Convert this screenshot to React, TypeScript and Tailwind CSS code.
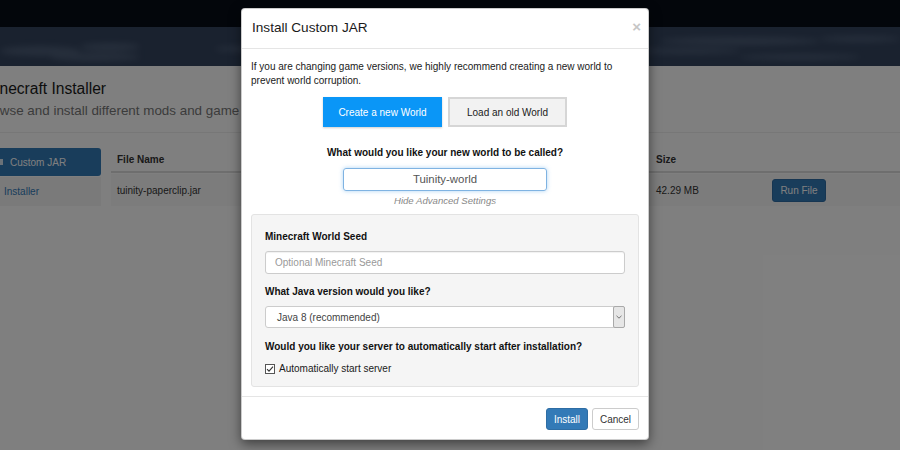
import React from "react";

function Banner() {
  return (
    <div className="relative h-[39px] bg-[#34445e] overflow-hidden">
      <svg width="900" height="39" className="absolute left-0 top-0">
        <defs>
          <filter id="b" x="-20%" y="-50%" width="140%" height="200%">
            <feGaussianBlur stdDeviation="3" />
          </filter>
        </defs>
        <g filter="url(#b)" fill="#6b7c95" opacity="0.45">
          <ellipse cx="40" cy="24" rx="40" ry="5" />
          <ellipse cx="110" cy="20" rx="30" ry="4" />
          <ellipse cx="95" cy="30" rx="45" ry="4" />
          <ellipse cx="250" cy="22" rx="35" ry="3" />
          <ellipse cx="740" cy="14" rx="80" ry="4" />
          <ellipse cx="690" cy="24" rx="50" ry="3" />
          <ellipse cx="800" cy="30" rx="60" ry="3" />
          <ellipse cx="860" cy="12" rx="40" ry="3" />
        </g>
      </svg>
    </div>
  );
}

function Background() {
  return (
    <div className="w-[900px] h-[450px] bg-white overflow-hidden">
      <div className="h-[27px] bg-[#060c16]" />
      <Banner />
      <div className="pt-[13px]">
        <div className="ml-[-17px] text-[15.6px] leading-[20px] text-[#1a1a1a] whitespace-nowrap">
          Minecraft Installer
        </div>
        <div className="ml-[-21px] mt-[3px] text-[13.4px] leading-[18px] text-[#777] whitespace-nowrap">
          Browse and install different mods and game versions
        </div>
        <div className="mt-[12px] h-px bg-[#eee]" />
        <div className="mt-[15px] flex">
          <div className="w-[101px] shrink-0 flex flex-col gap-[1px]">
            <div className="h-[28px] bg-[#337ab7] rounded-r-[3px] flex items-center text-white text-[10px] pl-[10px] relative">
              <span className="absolute left-[-3px] top-[11px] w-[6px] h-[6px] bg-white/80" />
              Custom JAR
            </div>
            <div className="h-[29px] bg-[#f5f5f5] flex items-center text-[#337ab7] text-[10px] pl-[4px]">
              Installer
            </div>
          </div>
          <div className="ml-[10px] flex-1">
            <div className="h-[25px] flex items-center border-b-2 border-[#ddd] text-[10px] font-bold text-[#333]">
              <div className="w-[539px] pl-[6px]">File Name</div>
              <div className="w-[122px] pl-[6px]">Size</div>
            </div>
            <div className="mt-[1px] h-[32px] flex items-center bg-[#f9f9f9] text-[10px] text-[#333]">
              <div className="w-[539px] pl-[6px]">tuinity-paperclip.jar</div>
              <div className="w-[122px] pl-[6px]">42.29 MB</div>
              <div className="h-[23px] w-[54px] bg-[#337ab7] border border-[#2e6da4] rounded-[3px] text-white flex items-center justify-center">
                Run File
              </div>
            </div>
          </div>
        </div>
      </div>
    </div>
  );
}

function Modal() {
  return (
    <div className="absolute left-[241px] top-[8px] w-[408px] bg-white rounded-[4px] border border-black/20 shadow-[0_4px_12px_rgba(0,0,0,0.5)] text-[#333]">
      <div className="h-[40px] border-b border-[#e5e5e5] px-[10px] pt-[10px] flex justify-between">
        <div className="text-[13.6px] leading-[18px] text-[#1a1a1a]">Install Custom JAR</div>
        <div className="text-[15px] leading-[14px] font-bold text-[#c6c6c6] mr-[-3px] mt-[1px]">×</div>
      </div>
      <div className="px-[9px] pt-[11px] pb-[9px]">
        <p className="text-[10px] leading-[14px] text-[#1a1a1a]">
          If you are changing game versions, we highly recommend creating a new world to prevent world corruption.
        </p>
        <div className="mt-[9px] flex justify-center gap-[6px]">
          <div className="w-[119px] h-[30px] bg-[#0a96f7] shadow-[0_1px_2px_rgba(0,0,0,0.2)] flex items-center justify-center text-white text-[10px]">
            Create a new World
          </div>
          <div className="w-[119px] h-[30px] bg-[#f2f2f2] border-2 border-[#d6d6d6] flex items-center justify-center text-[#1a1a1a] text-[10px]">
            Load an old World
          </div>
        </div>
        <div className="mt-[19px] text-center text-[10px] leading-[14px] font-bold text-[#111]">
          What would you like your new world to be called?
        </div>
        <div className="mt-[8px] flex justify-center">
          <div className="w-[204px] h-[23px] border border-[#7fb3e2] rounded-[3px] shadow-[0_0_4px_rgba(102,175,233,0.55)] flex items-center justify-center text-[11.4px] text-[#555]">
            Tuinity-world
          </div>
        </div>
        <div className="mt-[3px] text-center text-[9.6px] leading-[14px] italic text-[#888]">
          Hide Advanced Settings
        </div>
        <div className="mt-[6px] bg-[#f5f5f5] border border-[#e3e3e3] rounded-[3px] px-[13px] pt-[15px] pb-[10px]">
          <div className="text-[10px] leading-[14px] font-bold text-[#111]">Minecraft World Seed</div>
          <div className="mt-[7px] h-[23px] bg-white border border-[#ccc] rounded-[3px] shadow-[inset_0_1px_1px_rgba(0,0,0,0.06)] flex items-center pl-[9px] text-[10px] text-[#999]">
            Optional Minecraft Seed
          </div>
          <div className="mt-[11px] text-[10px] leading-[14px] font-bold text-[#111]">What Java version would you like?</div>
          <div className="mt-[7px] h-[22px] bg-white border border-[#ccc] rounded-[3px] flex items-center justify-between pl-[11px] text-[10px] text-[#444]">
            <span>Java 8 (recommended)</span>
            <div className="w-[12px] h-[22px] mr-[-1px] bg-[#e6e6e6] border border-[#a9a9a9] rounded-[2px] flex items-center justify-center">
              <svg width="6" height="4" viewBox="0 0 6 4">
                <path d="M0.5 0.8 L3 3.2 L5.5 0.8" fill="none" stroke="#666" strokeWidth="0.9" />
              </svg>
            </div>
          </div>
          <div className="mt-[12px] text-[10px] leading-[14px] font-bold text-[#111]">
            Would you like your server to automatically start after installation?
          </div>
          <div className="mt-[8px] flex items-center gap-[4px] text-[10px] leading-[14px] text-[#1a1a1a]">
            <svg width="10" height="10" viewBox="0 0 10 10">
              <rect x="0.5" y="0.5" width="9" height="9" fill="white" stroke="#555" />
              <path d="M2 5.2 L4 7.2 L8 2.6" fill="none" stroke="#333" strokeWidth="1.1" />
            </svg>
            <span>Automatically start server</span>
          </div>
        </div>
      </div>
      <div className="border-t border-[#e5e5e5] pt-[11px] pb-[9px] pr-[9px] flex justify-end gap-[4px]">
        <div className="w-[42px] h-[22px] bg-[#337ab7] border border-[#2e6da4] rounded-[3px] flex items-center justify-center text-white text-[10px]">
          Install
        </div>
        <div className="w-[47px] h-[22px] bg-white border border-[#ccc] rounded-[3px] flex items-center justify-center text-[#333] text-[10px]">
          Cancel
        </div>
      </div>
    </div>
  );
}

export default function App() {
  return (
    <div className="relative w-[900px] h-[450px] overflow-hidden font-['Liberation_Sans',Arial,sans-serif]">
      <Background />
      <div className="absolute inset-0 bg-black/50" />
      <Modal />
    </div>
  );
}
